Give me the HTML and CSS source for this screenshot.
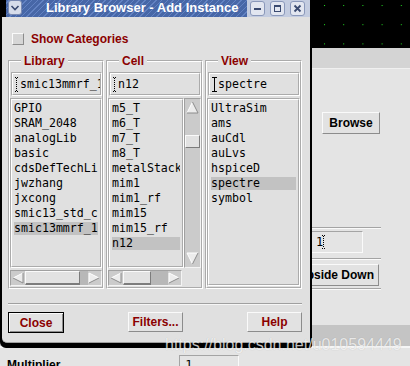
FILE: index.html
```html
<!DOCTYPE html>
<html lang="en">
<head>
    <meta charset="UTF-8">
    <title>Library Browser - Add Instance</title>
    <link rel="stylesheet" href="styles.css">
</head>
<body>
    <!-- the Add Instance form behind the browser window -->
    <div class="app">
        <div class="canvas">
            <svg width="410" height="48">
                <defs>
                    <pattern id="grid" width="19.2" height="19.2" x="16.8" y="5" patternUnits="userSpaceOnUse">
                        <rect width="1" height="1" fill="#22dd22"/>
                    </pattern>
                </defs>
                <rect width="410" height="48" fill="url(#grid)"/>
            </svg>
        </div>
        <div class="toolbar"></div>
        <div class="form">
            <button class="btn browse">Browse</button>
            <div class="rule rule-top"></div>
            <div class="count-field">1<svg class="ibeam" width="4" height="14"><path d="M0 0.5h3M1.5 1v12M0 13.5h3" stroke="#000" stroke-dasharray="1 1"/></svg></div>
            <div class="rule rule-mid"></div>
            <button class="btn flip">Upside Down</button>
            <div class="rule rule-low"></div>
            <div class="band"></div>
            <div class="mult-row">
                <span class="mult-label">Multiplier</span>
                <span class="mult-field">1</span>
            </div>
        </div>
    </div>

    <div class="dialog">
        <div class="titlebar">
            <span class="menu-btn">
                <svg width="12" height="13"><path d="M2.5 5l3.5 3.5 3.5-3.5" stroke="#3a4a70" stroke-width="1.6" fill="none"/></svg>
            </span>
            <span class="title">Library Browser - Add Instance</span>
            <span class="win-btns">
                <span class="wbtn"><svg width="13" height="13"><rect x="3" y="6" width="7" height="2" fill="#3a4a70"/></svg></span>
                <span class="wbtn"><svg width="13" height="13"><rect x="3.5" y="3.5" width="6" height="6" stroke="#3a4a70" fill="none"/><rect x="3" y="3" width="7" height="2" fill="#3a4a70"/></svg></span>
                <span class="wbtn"><svg width="13" height="13"><path d="M3.5 3.5l6 6M9.5 3.5l-6 6" stroke="#3a4a70" stroke-width="1.8"/></svg></span>
            </span>
        </div>

        <div class="dialog-body">
            <div class="show-cat"><span class="checkbox"></span>Show Categories</div>

            <div class="browsers">
                <fieldset class="group">
                    <legend>Library</legend>
                    <div class="field"><svg class="ibeam" width="4" height="15"><path d="M0 0.5h3M1.5 1v13M0 14.5h3" stroke="#000" stroke-dasharray="1 1"/></svg>smic13mmrf_1x</div>
                    <ul class="list">
                        <li>GPIO</li>
                        <li>SRAM_2048</li>
                        <li>analogLib</li>
                        <li>basic</li>
                        <li>cdsDefTechLib</li>
                        <li>jwzhang</li>
                        <li>jxcong</li>
                        <li>smic13_std_cell</li>
                        <li class="sel">smic13mmrf_1x</li>
                    </ul>
                    <div class="hscroll">
                        <span class="arrow"><svg width="14" height="12"><polygon points="2,6 12,1 12,11" fill="#ececec"/><path d="M2 6L12 1" stroke="#fff"/><path d="M2 6L12 11V1" stroke="#8c8c8c" fill="none"/></svg></span>
                        <span class="thumb thumb-lib"></span>
                        <span class="trough"></span>
                        <span class="arrow"><svg width="13" height="12"><polygon points="11,6 1,1 1,11" fill="#ececec"/><path d="M1 11V1L11 6" stroke="#fff" fill="none"/><path d="M11 6L1 11" stroke="#8c8c8c"/></svg></span>
                    </div>
                </fieldset>

                <fieldset class="group">
                    <legend>Cell</legend>
                    <div class="field"><svg class="ibeam" width="4" height="15"><path d="M0 0.5h3M1.5 1v13M0 14.5h3" stroke="#000" stroke-dasharray="1 1"/></svg>n12</div>
                    <div class="list-row">
                        <ul class="list">
                            <li>m5_T</li>
                            <li>m6_T</li>
                            <li>m7_T</li>
                            <li>m8_T</li>
                            <li>metalStack</li>
                            <li>mim1</li>
                            <li>mim1_rf</li>
                            <li>mim15</li>
                            <li>mim15_rf</li>
                            <li class="sel">n12</li>
                        </ul>
                        <div class="vscroll">
                            <span class="varrow"><svg width="13" height="13"><polygon points="6.5,1 1,12 12,12" fill="#ececec"/><path d="M1 12L6.5 1" stroke="#fff"/><path d="M6.5 1L12 12H1" stroke="#8c8c8c" fill="none"/></svg></span>
                            <span class="vtrack"><span class="vthumb"></span></span>
                            <span class="varrow"><svg width="13" height="13"><polygon points="6.5,12 1,1 12,1" fill="#ececec"/><path d="M12 1H1L6.5 12" stroke="#fff" fill="none"/><path d="M6.5 12L12 1" stroke="#8c8c8c"/></svg></span>
                        </div>
                    </div>
                    <div class="hscroll-row">
                        <div class="hscroll">
                            <span class="arrow"><svg width="14" height="12"><polygon points="2,6 12,1 12,11" fill="#ececec"/><path d="M2 6L12 1" stroke="#fff"/><path d="M2 6L12 11V1" stroke="#8c8c8c" fill="none"/></svg></span>
                            <span class="thumb thumb-cell"></span>
                            <span class="trough"></span>
                            <span class="arrow"><svg width="13" height="12"><polygon points="11,6 1,1 1,11" fill="#ececec"/><path d="M1 11V1L11 6" stroke="#fff" fill="none"/><path d="M11 6L1 11" stroke="#8c8c8c"/></svg></span>
                        </div>
                    </div>
                </fieldset>

                <fieldset class="group">
                    <legend>View</legend>
                    <div class="field"><svg class="ibeam" width="5" height="15"><path d="M0 0.5h5M2.5 1v13M0 14.5h5" stroke="#000"/></svg>spectre</div>
                    <ul class="list list-tall">
                        <li>UltraSim</li>
                        <li>ams</li>
                        <li>auCdl</li>
                        <li>auLvs</li>
                        <li>hspiceD</li>
                        <li class="sel">spectre</li>
                        <li>symbol</li>
                    </ul>
                </fieldset>
            </div>

            <div class="separator"></div>

            <div class="actions">
                <button class="btn dlg-btn btn-default">Close</button>
                <button class="btn dlg-btn">Filters...</button>
                <button class="btn dlg-btn">Help</button>
            </div>
        </div>
    </div>

    <div class="watermark">https://blog.csdn.net/u010594449</div>
</body>
</html>
```

FILE: styles.css
```css
* {
    box-sizing: border-box;
}
body {
    margin: 0;
    width: 410px;
    height: 366px;
    overflow: hidden;
    position: relative;
    background: #e4e4e4;
    font-family: "Liberation Sans", Arial, sans-serif;
}

/* background window */
.app {
    display: flex;
    flex-direction: column;
    height: 366px;
}
.canvas {
    flex: none;
    height: 48px;
    background: #000;
}
.canvas svg {
    display: block;
}
.toolbar {
    flex: none;
    height: 21px;
    background: #d4d4d4;
    border-bottom: 1px solid #f0f0f0;
}
.form {
    flex: none;
    display: flex;
    flex-direction: column;
    align-items: flex-start;
    padding-top: 43px;
}
.form > * {
    flex: none;
}
.btn {
    font: bold 12px "Liberation Sans", Arial, sans-serif;
    background: #e2e2e2;
    border: 1px solid;
    border-color: #fafafa #8c8c8c #8c8c8c #fafafa;
    padding: 0;
    height: 22px;
}
.browse {
    margin-left: 322px;
    width: 58px;
    color: #000;
}
.rule {
    width: 381px;
    border-top: 1px solid #a4a4a4;
    border-bottom: 1px solid #fafafa;
}
.rule-top {
    margin-top: 93px;
}
.count-field {
    margin-top: 2px;
    margin-left: 306px;
    width: 57px;
    height: 22px;
    padding-left: 9px;
    border: 1px solid;
    border-color: #a4a4a4 #fafafa #fafafa #a4a4a4;
    font: 12px/20px "DejaVu Sans Mono", monospace;
    display: flex;
    align-items: center;
}
.count-field .ibeam {
    margin-left: -1px;
}
.rule-mid {
    margin-top: 5px;
}
.flip {
    margin-top: 4px;
    margin-left: 293px;
    width: 86px;
    color: #000;
}
.rule-low {
    margin-top: 2px;
}
.band {
    margin-top: 35px;
    width: 410px;
    height: 23px;
    background: #c4c4c4;
    border-bottom: 2px solid #f6f6f6;
}
.mult-row {
    display: flex;
    align-items: flex-start;
    padding-top: 7px;
    width: 410px;
}
.mult-label {
    margin-left: 7px;
    margin-top: 3px;
    font: bold 12px/14px "Liberation Sans", Arial, sans-serif;
}
.mult-field {
    margin-left: 119px;
    width: 60px;
    height: 18px;
    padding-left: 5px;
    border: 1px solid;
    border-color: #a4a4a4 #fafafa #fafafa #a4a4a4;
    font: 12px/18px "DejaVu Sans Mono", monospace;
}

/* library browser window */
.dialog {
    position: absolute;
    left: 0;
    top: 0;
    width: 312px;
    height: 348px;
    background: #000;
    padding: 0 2px 0 2px;
    border-bottom-left-radius: 6px;
    border-bottom-right-radius: 3px;
}
.titlebar {
    margin-left: 4px;
    height: 17px;
    display: flex;
    align-items: flex-start;
    background: repeating-linear-gradient(135deg, #4767a7 0 2px, #6282c2 2px 3px, #4767a7 3px 4px);
}
.menu-btn {
    margin-left: 2px;
    width: 14px;
    height: 15px;
    background: #d6dcea;
    border: 1px solid #7a8ab2;
    border-radius: 3px;
    display: flex;
    align-items: center;
    justify-content: center;
}
.title {
    margin-left: 24px;
    color: #fff;
    font: bold 13px/16px "Liberation Sans", Arial, sans-serif;
    flex: 1;
}
.win-btns {
    display: flex;
    gap: 5px;
    height: 17px;
    padding: 1px 5px 0 3px;
    background: #c3cce0;
}
.wbtn {
    width: 15px;
    height: 15px;
    background: #e2e6f0;
    border: 1px solid #8a98ba;
    border-radius: 3px;
    display: flex;
    align-items: center;
    justify-content: center;
}
.dialog-body {
    height: 326px;
    background: #e0e0e0;
    padding: 16px 8px 0 6px;
    display: flex;
    flex-direction: column;
    border-bottom: 1px solid #a0a0a0;
    border-bottom-left-radius: 5px;
}
.show-cat {
    display: flex;
    align-items: center;
    gap: 7px;
    margin-left: 4px;
    height: 12px;
    color: #8b0000;
    font: bold 12px/12px "Liberation Sans", Arial, sans-serif;
}
.checkbox {
    width: 12px;
    height: 12px;
    background: #d6d6d6;
    border: 1px solid;
    border-color: #fafafa #8c8c8c #8c8c8c #fafafa;
}
.browsers {
    margin-top: 9px;
    display: grid;
    grid-template-columns: 96px 97px 97px;
    gap: 2px;
    height: 235px;
}
.group {
    margin: 0;
    min-width: 0;
    padding: 4px 0 1px 0;
    border: 2px groove #fff;
    display: flex;
    flex-direction: column;
}
.group legend {
    margin-left: 11px;
    padding: 0 3px;
    color: #8b0000;
    font: bold 12px/14px "Liberation Sans", Arial, sans-serif;
}
.field {
    margin-left: 1px;
    height: 24px;
    border: 2px groove #fff;
    padding-left: 2px;
    display: flex;
    align-items: center;
    gap: 1px;
    overflow: hidden;
    white-space: nowrap;
    font: 11.6px "DejaVu Sans Mono", monospace;
}
.ibeam {
    flex: none;
}
.list {
    margin: 2px 0 0 0;
    padding: 2px 2px 0 2px;
    list-style: none;
    height: 170px;
    border: 2px groove #fff;
    overflow: hidden;
    font: 11.6px/13px "DejaVu Sans Mono", monospace;
}
.list li {
    margin-bottom: 2px;
    white-space: nowrap;
    overflow: hidden;
}
.list .sel {
    background: #c2c2c2;
}
.list-tall {
    flex: 1;
    height: auto;
}
.list-row {
    display: flex;
    margin-top: 2px;
    height: 170px;
}
.list-row .list {
    margin: 0;
    flex: 1;
    min-width: 0;
}
.vscroll {
    width: 17px;
    display: flex;
    flex-direction: column;
    background: #cbcbcb;
    border: 1px solid;
    border-color: #a0a0a0 #f4f4f4 #f4f4f4 #a0a0a0;
    padding: 1px 0;
}
.varrow {
    height: 15px;
    display: flex;
    align-items: center;
    justify-content: center;
}
.vtrack {
    flex: 1;
    padding-top: 20px;
}
.vthumb {
    display: block;
    height: 13px;
    background: #e2e2e2;
    border: 1px solid;
    border-color: #fafafa #7c7c7c #7c7c7c #fafafa;
}
.hscroll-row {
    display: flex;
    margin-right: 19px;
}
.hscroll-row .hscroll {
    flex: 1;
}
.hscroll {
    margin-top: 2px;
    height: 16px;
    display: flex;
    background: #cbcbcb;
    border: 1px solid;
    border-color: #a0a0a0 #f4f4f4 #f4f4f4 #a0a0a0;
}
.arrow {
    display: flex;
    align-items: center;
    justify-content: center;
}
.thumb {
    background: #e2e2e2;
    border: 1px solid;
    border-color: #fafafa #7c7c7c #7c7c7c #fafafa;
    border-bottom-width: 2px;
}
.thumb-lib {
    width: 55px;
}
.thumb-cell {
    width: 28px;
}
.trough {
    flex: 1;
    background: #b8b8b8;
}
.separator {
    margin-top: 14px;
    border-top: 1px solid #a0a0a0;
    border-bottom: 1px solid #f6f6f6;
}
.actions {
    margin-top: 7px;
    display: flex;
    justify-content: space-between;
}
.dlg-btn {
    width: 55px;
    height: 20px;
    color: #8b0000;
}
.btn-default {
    width: 56px;
    height: 21px;
    border: 1px solid #000;
    box-shadow: inset 1px 1px #fafafa, inset -1px -1px #8c8c8c;
}

.watermark {
    position: absolute;
    left: 165px;
    top: 336px;
    font: 16px/18px "Liberation Sans", Arial, sans-serif;
    color: rgba(255, 255, 255, 0.75);
    text-shadow: 0 0 1px rgba(0, 0, 0, 0.2);
    white-space: nowrap;
}
```
